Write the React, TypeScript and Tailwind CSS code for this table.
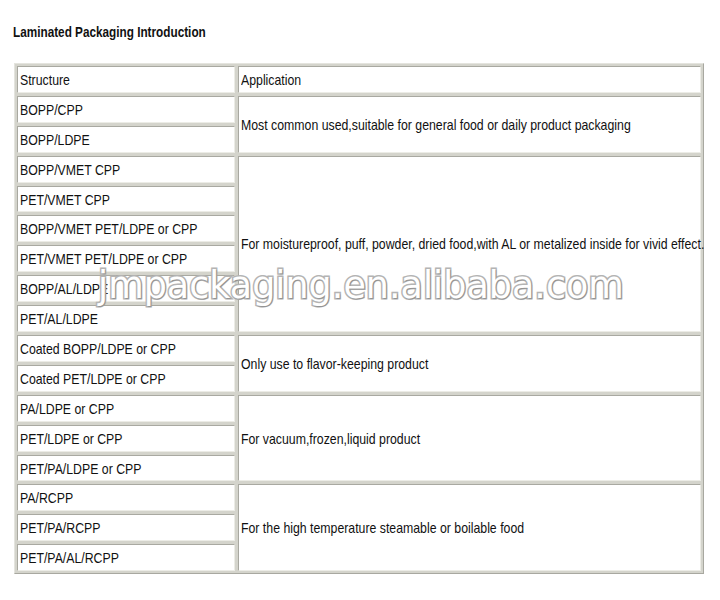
import React from "react";

type Group = { items: string[]; app: string; span: string };

const groups: Group[] = [
  {
    items: ["BOPP/CPP", "BOPP/LDPE"],
    app: "Most common used,suitable for general food or daily product packaging",
    span: "row-span-2",
  },
  {
    items: [
      "BOPP/VMET CPP",
      "PET/VMET CPP",
      "BOPP/VMET PET/LDPE or CPP",
      "PET/VMET PET/LDPE or CPP",
      "BOPP/AL/LDPE",
      "PET/AL/LDPE",
    ],
    app: "For moistureproof, puff, powder, dried food,with AL or metalized inside for vivid effect.",
    span: "row-span-6",
  },
  {
    items: ["Coated BOPP/LDPE or CPP", "Coated PET/LDPE or CPP"],
    app: "Only use to flavor-keeping product",
    span: "row-span-2",
  },
  {
    items: ["PA/LDPE or CPP", "PET/LDPE or CPP", "PET/PA/LDPE or CPP"],
    app: "For vacuum,frozen,liquid product",
    span: "row-span-3",
  },
  {
    items: ["PA/RCPP", "PET/PA/RCPP", "PET/PA/AL/RCPP"],
    app: "For the high temperature steamable or boilable food",
    span: "row-span-3",
  },
];

const cell =
  "min-w-0 bg-white border border-t-[#a9a9a1] border-l-[#a9a9a1] border-r-[#ecece6] border-b-[#ecece6] flex items-center pl-[2px] overflow-visible";

function T({ children }: { children: React.ReactNode }) {
  return (
    <span className="inline-block origin-left scale-x-[0.82] whitespace-nowrap text-[15px] leading-none text-[#111]">
      {children}
    </span>
  );
}

export default function App() {
  return (
    <div className="relative w-[720px] h-[600px] bg-white font-['Liberation_Sans',Arial,sans-serif] overflow-hidden">
      <div className="pt-[20px] pl-[13px] h-[63px]">
        <span className="inline-block origin-left scale-x-[0.84] whitespace-nowrap text-[14px] font-bold leading-none text-[#111]">
          Laminated Packaging Introduction
        </span>
      </div>
      <div className="ml-[14px] w-[690px] bg-[#d4d4cc] border border-t-[#e4e4de] border-l-[#e4e4de] border-r-[#a8a8a0] border-b-[#a8a8a0] p-[2px] grid grid-cols-[218px_minmax(0,1fr)] auto-rows-[26.9px] gap-[3px]">
        <div className={`${cell} col-start-1`}>
          <T>Structure</T>
        </div>
        <div className={`${cell} col-start-2`}>
          <T>Application</T>
        </div>
        {groups.map((g, gi) => (
          <React.Fragment key={gi}>
            {g.items.map((it, i) => (
              <React.Fragment key={i}>
                <div className={`${cell} col-start-1`}>
                  <T>{it}</T>
                </div>
                {i === 0 && (
                  <div className={`${cell} col-start-2 ${g.span}`}>
                    <T>{g.app}</T>
                  </div>
                )}
              </React.Fragment>
            ))}
          </React.Fragment>
        ))}
      </div>
      <div className="absolute left-[98px] top-[268px] pointer-events-none whitespace-nowrap font-['DejaVu_Sans',sans-serif] text-[36.5px] leading-none text-white [-webkit-text-stroke:3px_#b4b4b4] [paint-order:stroke_fill] [text-shadow:1px_1px_1px_rgba(0,0,0,0.2)]">
        jmpackaging.en.alibaba.com
      </div>
    </div>
  );
}
